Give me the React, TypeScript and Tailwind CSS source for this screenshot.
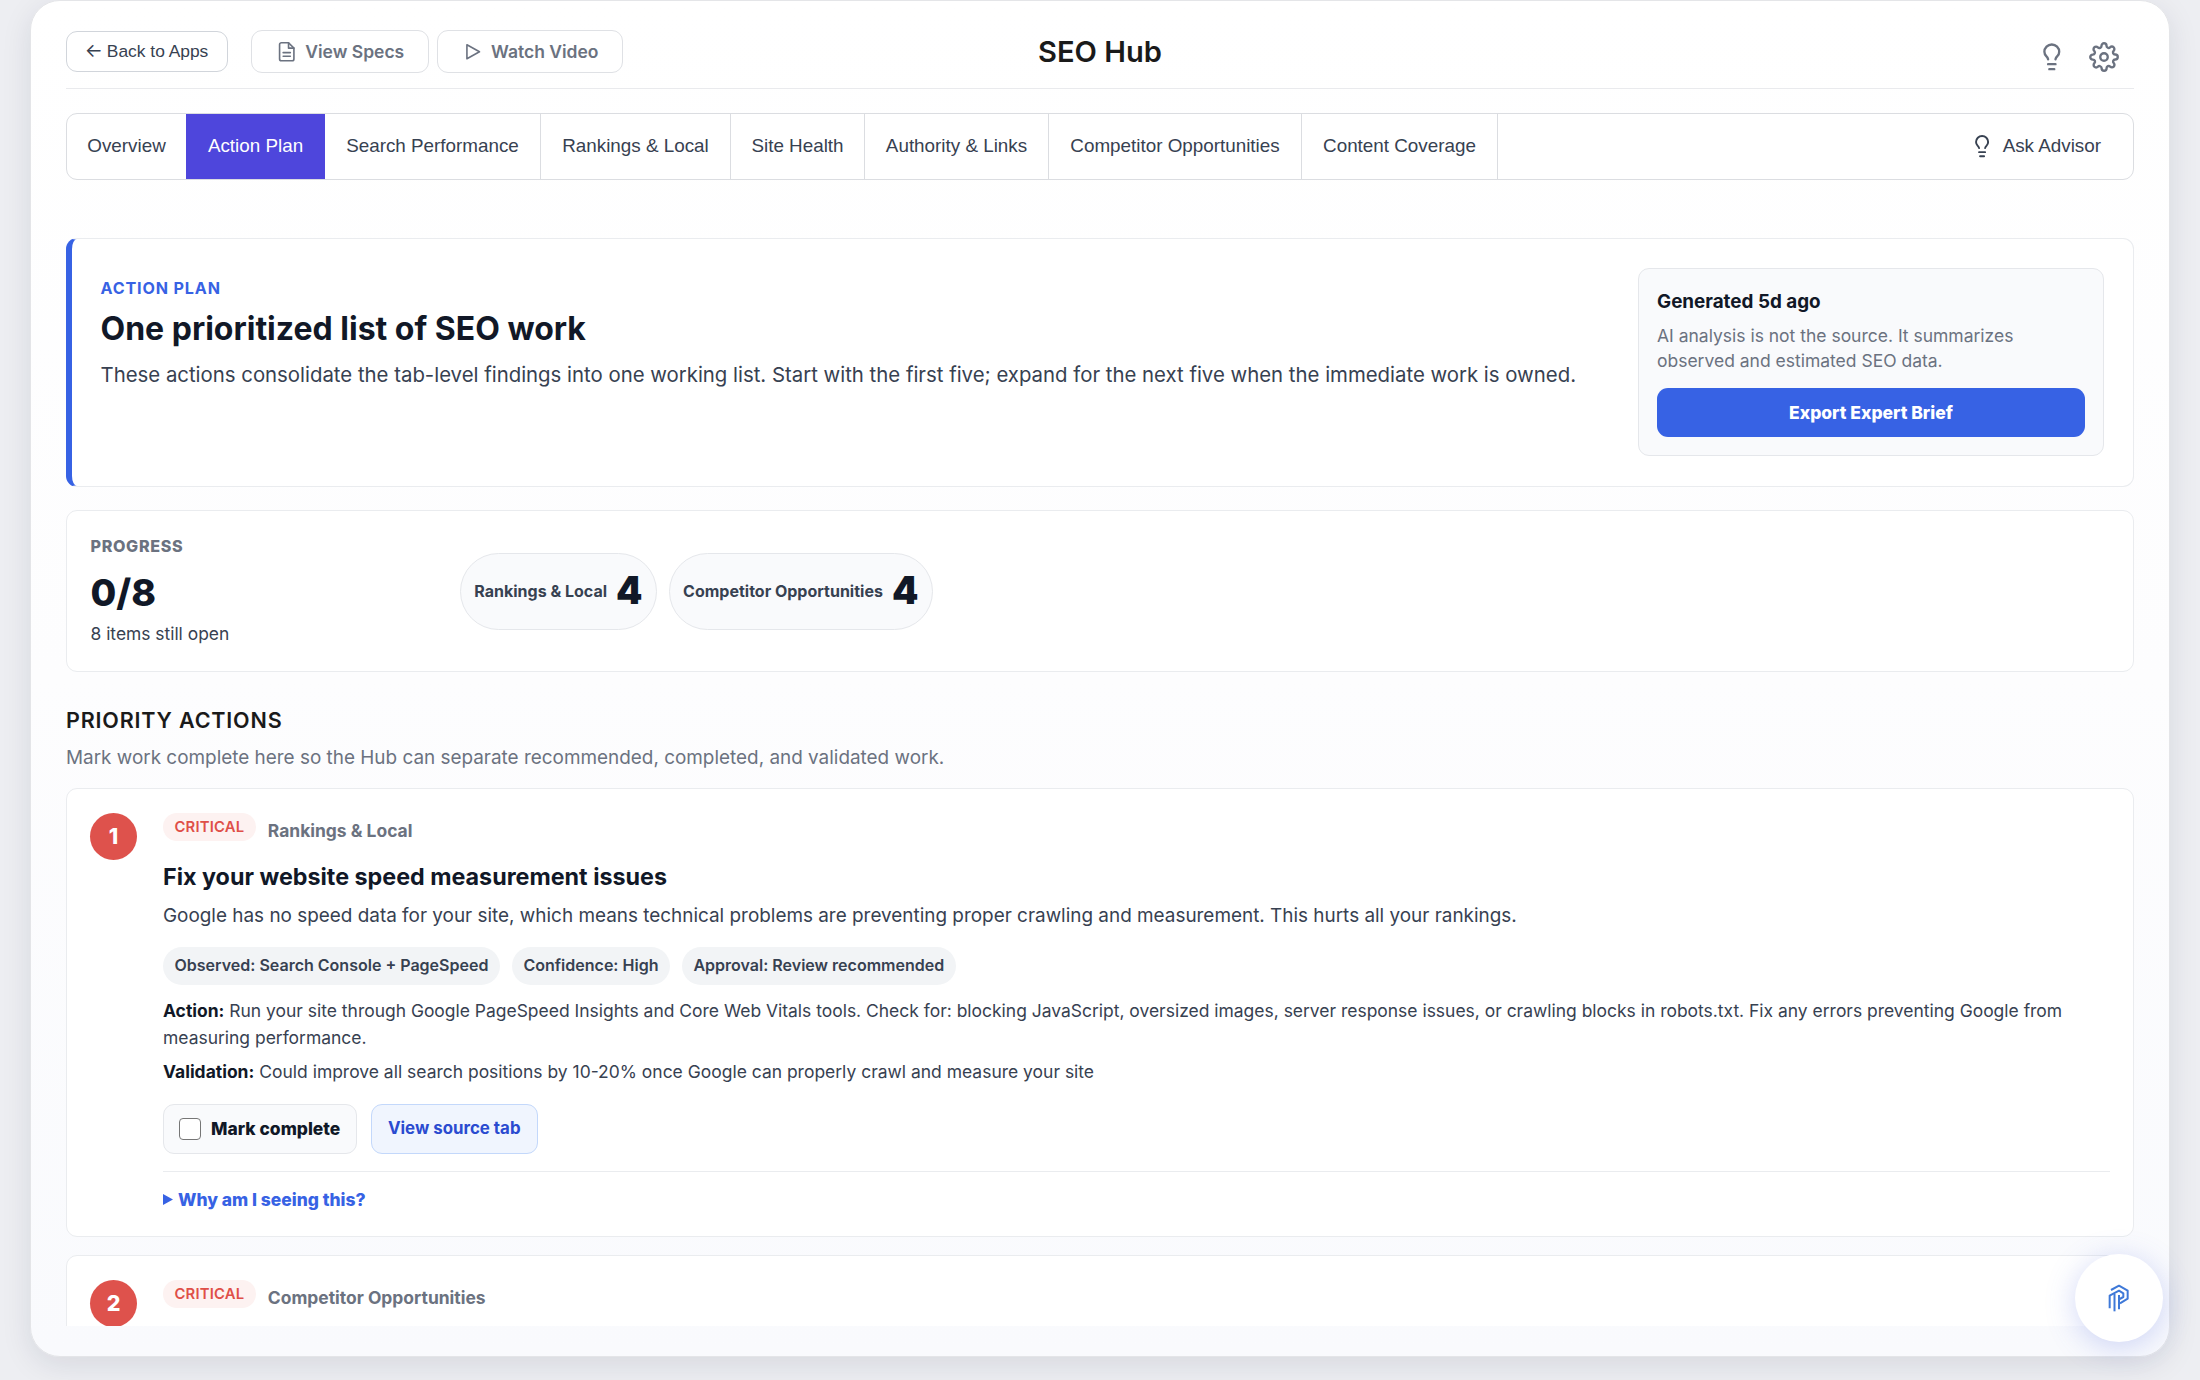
import React from 'react';
import { FiSettings } from 'react-icons/fi';

const tabs = [
  { label: 'Overview', width: 'w-[119px]' },
  { label: 'Action Plan', width: 'w-[139px]' },
  { label: 'Search Performance', width: 'w-[216px]' },
  { label: 'Rankings & Local', width: 'w-[190px]' },
  { label: 'Site Health', width: 'w-[134px]' },
  { label: 'Authority & Links', width: 'w-[184px]' },
  { label: 'Competitor Opportunities', width: 'w-[253px]' },
  { label: 'Content Coverage', width: 'w-[196px]' },
];

function Bulb({ className }: { className: string }) {
  return (
    <svg viewBox="0 0 24 24" fill="none" stroke="currentColor" strokeWidth="1.9" strokeLinecap="round" strokeLinejoin="round" className={className}>
      <path d="M15 14c.2-1 .7-1.7 1.5-2.5 1-.9 1.5-2.2 1.5-3.5A6 6 0 0 0 6 8c0 1 .2 2.2 1.5 3.5.7.7 1.3 1.5 1.5 2.5" />
      <path d="M9 18h6M10 22h4" />
    </svg>
  );
}

function FileIcon() {
  return (
    <svg viewBox="0 0 24 24" fill="none" stroke="currentColor" strokeWidth="1.8" strokeLinecap="round" strokeLinejoin="round" className="size-[21.5px]">
      <path d="M14 2H6a2 2 0 0 0-2 2v16a2 2 0 0 0 2 2h12a2 2 0 0 0 2-2V8z" />
      <path d="M14 2v6h6M16 13H8M16 17H8" />
    </svg>
  );
}

function PlayIcon() {
  return (
    <svg viewBox="0 0 24 24" fill="none" stroke="currentColor" strokeWidth="1.8" strokeLinecap="round" strokeLinejoin="round" className="size-[21.5px]">
      <path d="M5.5 4.2 19.5 12l-14 7.8z" />
    </svg>
  );
}

function Logo() {
  return (
    <svg viewBox="0 0 66 84" fill="none" stroke="#3f79d8" strokeWidth="6" strokeLinejoin="round" className="h-[28px] w-[22px]">
      <path d="M9 18 33 5l26 15v24L36 58" />
      <path d="M5 73V35l28-15 13 8v11l-11 6" />
      <path d="M19.500 82V30" />
      <path d="M33 76V33" />
    </svg>
  );
}

function Header() {
  return (
    <header className="relative flex h-[88px] shrink-0 items-start border-b border-[#e9eaed] pt-[29px]">
      <button className="mt-[1px] flex h-[41px] w-[162px] items-center justify-center gap-[4px] rounded-[11px] border-[1.5px] border-[#d1d5db] bg-white pr-[1px] text-[17.4px] text-[#374151]">
        <span className="font-['Inter',sans-serif] text-[19px]">←</span>
        <span>Back to Apps</span>
      </button>
      <button className="ml-[23px] flex h-[43px] w-[178px] items-center justify-center gap-2 rounded-[11px] border-[1.5px] border-[#dfe1e5] bg-white pt-[1px] font-['Inter',sans-serif] text-[17.5px] font-semibold text-[#6b7280]">
        <FileIcon />
        View Specs
      </button>
      <button className="ml-[8px] flex h-[43px] w-[186px] items-center justify-center gap-2 rounded-[11px] border-[1.5px] border-[#dfe1e5] bg-white pt-[1px] font-['Inter',sans-serif] text-[17.5px] font-semibold text-[#6b7280]">
        <PlayIcon />
        Watch Video
      </button>
      <h1 className="absolute inset-x-0 top-[34px] text-center font-['Inter',sans-serif] text-[29.1px] leading-[34px] font-semibold text-[#1a1a1a]">SEO Hub</h1>
      <div className="mt-[12px] mr-[15px] ml-auto flex items-center gap-[22px] text-[#6b7280]">
        <Bulb className="size-[29.6px]" />
        <FiSettings className="size-[30px] [stroke-width:1.9]" />
      </div>
    </header>
  );
}

function Tabs() {
  return (
    <nav className="mt-[24px] flex h-[67px] shrink-0 overflow-hidden rounded-[11px] border-[1.5px] border-[#dbdde1] bg-white text-[18.83px] text-[#374151]">
      {tabs.map((t, i) => (
        <div
          key={t.label}
          className={
            'flex shrink-0 items-center justify-center whitespace-nowrap ' +
            t.width +
            (i === 1 ? ' bg-[#4e46dc] text-white' : i === 0 ? '' : ' border-r border-[#dbdde1]')
          }
        >
          {t.label}
        </div>
      ))}
      <div className="ml-auto flex items-center gap-[8px] pr-[32px]">
        <Bulb className="size-[24.2px]" />
        Ask Advisor
      </div>
    </nav>
  );
}

function Hero() {
  return (
    <section className="mt-[58px] flex h-[249px] rounded-[11px] border border-l-[6px] border-[#eaecef] border-l-[#3762e4] bg-white pr-[29px] pl-[28.500px]">
      <div className="flex-1 pt-[37px]">
        <div className="text-[16.14px] leading-[24px] font-bold tracking-[0.85px] text-[#3762e4]">ACTION PLAN</div>
        <h2 className="mt-[9px] text-[32px] leading-[40px] font-bold text-[#111827]">One prioritized list of SEO work</h2>
        <p className="mt-[10px] text-[20.36px] leading-[32px] whitespace-nowrap text-[#374151]">
          These actions consolidate the tab-level findings into one working list. Start with the first five; expand for the next five when the immediate work is owned.
        </p>
      </div>
      <aside className="mt-[29px] h-[188px] w-[466px] rounded-[11px] border-[1.5px] border-[#e5e7eb] bg-[#f9fafc] px-[18px] pt-[18px]">
        <div className="text-[18.83px] leading-[30px] font-bold text-[#111827]">Generated 5d ago</div>
        <p className="mt-[7px] text-[17.49px] leading-[24.7px] text-[#6b7280]">
          AI analysis is not the source. It summarizes
          <br />
          observed and estimated SEO data.
        </p>
        <button className="mt-[15px] flex h-[49px] w-full items-center justify-center rounded-[11px] bg-[#3762e4] text-[17.49px] font-extrabold text-white">
          Export Expert Brief
        </button>
      </aside>
    </section>
  );
}

function CountPill({ label, count }: { label: string; count: number }) {
  return (
    <div className="flex h-[77px] items-center gap-[9px] rounded-full border-[1.5px] border-[#e5e7eb] bg-[#f9fafc] px-[13.300px]">
      <span className="text-[16px] font-bold text-[#374151]">{label}</span>
      <span className="text-[37.66px] font-black text-[#111827]">{count}</span>
    </div>
  );
}

function Progress() {
  return (
    <section className="mt-[23px] flex h-[162px] items-center rounded-[11px] border border-[#eaecef] bg-white pl-[23.500px]">
      <div className="w-[369.500px]">
        <div className="text-[16.14px] leading-[24px] font-extrabold tracking-[0.65px] text-[#6b7280]">PROGRESS</div>
        <div className="mt-[10px] text-[37.3px] leading-[50px] font-extrabold text-[#111827]">0/8</div>
        <div className="mt-[3px] mb-[1px] text-[17.4px] leading-[26px] text-[#374151]">8 items still open</div>
      </div>
      <div className="flex gap-[12px]">
        <CountPill label="Rankings & Local" count={4} />
        <CountPill label="Competitor Opportunities" count={4} />
      </div>
    </section>
  );
}

function CardTop({ area }: { area: string }) {
  return (
    <div className="flex items-start gap-[12px]">
      <span className="flex h-[28px] items-center rounded-full bg-[#fdf2f1] px-[11.500px] pt-[1px] text-[14.8px] font-semibold tracking-[0.2px] text-[#df4f48]">CRITICAL</span>
      <span className="pt-[5px] text-[17.45px] leading-[26px] font-bold text-[#6b7280]">{area}</span>
    </div>
  );
}

function Rank({ n }: { n: number }) {
  return (
    <div className="flex size-[47px] shrink-0 items-center justify-center rounded-full bg-[#de524c] text-[21.5px] font-extrabold text-white">{n}</div>
  );
}

function Chip({ children }: { children: React.ReactNode }) {
  return <span className="flex h-[38px] items-center rounded-full bg-[#f2f4f6] px-[11.500px] text-[16.02px] font-semibold text-[#374151]">{children}</span>;
}

function ActionCard() {
  return (
    <article className="mt-[16px] flex h-[449px] shrink-0 gap-[26px] rounded-[11px] border border-[#eaecef] bg-white pt-[23.500px] pr-[23px] pl-[23px]">
      <Rank n={1} />
      <div className="flex-1">
        <CardTop area="Rankings & Local" />
        <h3 className="mt-[17px] text-[23.3px] leading-[32px] font-bold text-[#111827]">Fix your website speed measurement issues</h3>
        <p className="mt-[8px] text-[18.92px] leading-[30px] text-[#374151]">
          Google has no speed data for your site, which means technical problems are preventing proper crawling and measurement. This hurts all your rankings.
        </p>
        <div className="mt-[16px] flex gap-[12px]">
          <Chip>Observed: Search Console + PageSpeed</Chip>
          <Chip>Confidence: High</Chip>
          <Chip>Approval: Review recommended</Chip>
        </div>
        <p className="mt-[13.500px] text-[17.47px] leading-[26.5px] text-[#374151]">
          <b className="font-bold text-[#111827]">Action:</b> Run your site through Google PageSpeed Insights and Core Web Vitals tools. Check for: blocking JavaScript, oversized
          images, server response issues, or crawling blocks in robots.txt. Fix any errors preventing Google from measuring performance.
        </p>
        <p className="mt-[8px] text-[17.475px] leading-[26.5px] text-[#374151]">
          <b className="font-bold text-[#111827]">Validation:</b> Could improve all search positions by 10-20% once Google can properly crawl and measure your site
        </p>
        <div className="mt-[18px] flex gap-[14px]">
          <label className="flex h-[50px] w-[193.500px] items-center gap-[10px] rounded-[11px] border-[1.5px] border-[#e5e7eb] bg-[#f9fafc] pt-[1px] pl-[15px] text-[17.45px] font-extrabold text-[#111827]">
            <span className="size-[22px] rounded-[4px] border-[1.5px] border-[#767676] bg-white" />
            Mark complete
          </label>
          <button className="flex h-[50px] w-[167.500px] items-center justify-center rounded-[11px] border-[1.5px] border-[#c3d8fb] bg-[#f0f5fe] pt-[1px] text-[16.85px] font-bold text-[#2a4bd0]">
            View source tab
          </button>
        </div>
        <div className="mt-[17px] flex items-center gap-[5px] border-t border-[#eaecef] pt-[15px] text-[17.45px] leading-[26px] font-extrabold text-[#3762e4]">
          <svg viewBox="0 0 10 11" className="h-[11px] w-[10px]" fill="currentColor">
            <path d="M0 0 10 5.500 0 11z" />
          </svg>
          Why am I seeing this?
        </div>
      </div>
    </article>
  );
}

export default function App() {
  return (
    <div className="relative h-[1380px] w-[2200px] overflow-hidden bg-[#edeef2] px-[30px] font-['Liberation_Sans',sans-serif]">
      <div className="h-[1357px] rounded-[30px] border border-[#e4e5e8] bg-linear-to-b from-white via-[#fdfdfe] to-[#f9fafd] px-[35px] shadow-[0_8px_30px_rgba(20,25,60,0.10)]">
        <div className="flex h-[1325px] flex-col overflow-hidden">
          <Header />
          <Tabs />
          <div className="flex shrink-0 flex-col font-['Inter',sans-serif]">
            <Hero />
            <Progress />
            <h2 className="mt-[33px] text-[21.52px] leading-[30px] font-semibold tracking-[0.82px] text-[#1a1a1a]">PRIORITY ACTIONS</h2>
            <p className="mt-[9px] text-[18.91px] leading-[28px] text-[#6b7280]">Mark work complete here so the Hub can separate recommended, completed, and validated work.</p>
            <ActionCard />
            <article className="mt-[18px] flex h-[449px] shrink-0 gap-[26px] rounded-[11px] border border-[#eaecef] bg-white pt-[23.500px] pl-[23px]">
              <Rank n={2} />
              <CardTop area="Competitor Opportunities" />
            </article>
          </div>
        </div>
      </div>
      <div className="absolute top-[1254px] left-[2074.500px] flex size-[88px] items-center justify-center rounded-full bg-white shadow-[0_5px_30px_rgba(79,100,220,0.26)]">
        <Logo />
      </div>
    </div>
  );
}
